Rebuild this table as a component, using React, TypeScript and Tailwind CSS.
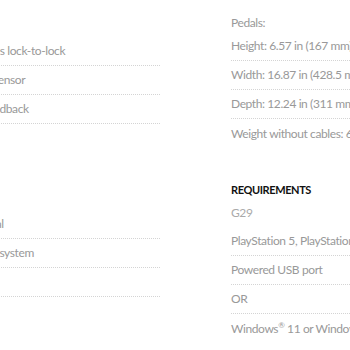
import React from 'react';

const Row: React.FC<{ children?: React.ReactNode; last?: boolean }> = ({ children, last }) => (
  <div
    className={`h-[29px] flex items-center whitespace-nowrap ${
      last ? '' : 'border-b border-dotted border-[#d4d4d4]'
    }`}
  >
    {children}
  </div>
);

const App: React.FC = () => {
  return (
    <div
      className="w-[350px] h-[350px] overflow-hidden bg-white text-[12px] tracking-[-0.4px] text-[#999]"
      style={{ fontFamily: 'Lato, "Noto Sans", sans-serif' }}
    >
      <div className="flex gap-[71px] ml-[-103px] pt-px">
        {/* left column */}
        <div className="w-[263px] shrink-0">
          <div className="h-[36px]" />
          <Row>Rotation: 900 degrees lock-to-lock</Row>
          <Row>Hall-effect steering sensor</Row>
          <Row>Dual-motor force feedback</Row>
          <div className="h-[86px] flex flex-col justify-center">
            <h3 className="text-[11px] font-bold uppercase text-[#111]">Pedals</h3>
          </div>
          <Row>Nonlinear brake pedal</Row>
          <Row>Patented no-overlap system</Row>
          <Row>Steel pedal</Row>
        </div>

        {/* right column */}
        <div className="w-[285px] shrink-0">
          <div className="pt-[13px] leading-[18px]">Pedals:</div>
          <Row>Height: 6.57 in (167 mm)</Row>
          <Row>Width: 16.87 in (428.5 mm)</Row>
          <Row>Depth: 12.24 in (311 mm)</Row>
          <Row last>Weight without cables: 6.6 lbs (3.1 kg)</Row>
          <h3 className="mt-[34px] h-[16px] leading-[16px] text-[11px] font-bold uppercase text-[#111]">
            Requirements
          </h3>
          <div className="h-[29px] flex items-center text-[#aaa]">G29</div>
          <Row>PlayStation 5, PlayStation 4</Row>
          <Row>Powered USB port</Row>
          <Row>OR</Row>
          <Row last>
            Windows<sup className="text-[8px]">®</sup>&nbsp;11 or Windows 10 or later
          </Row>
        </div>
      </div>
    </div>
  );
};

export default App;
